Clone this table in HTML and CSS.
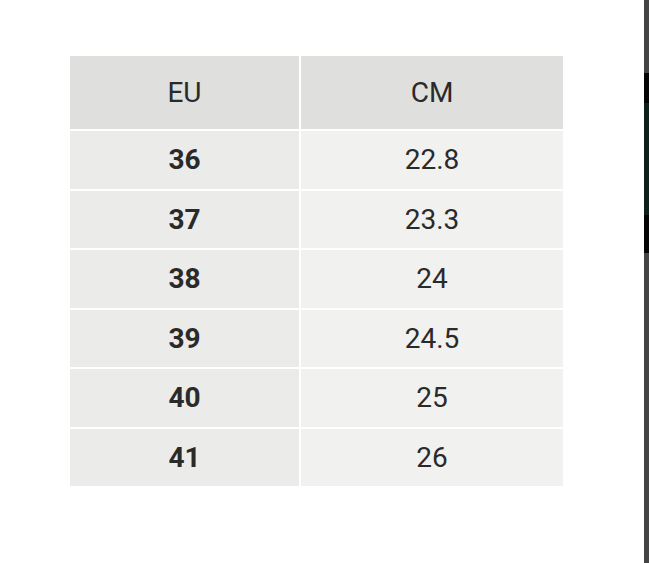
FILE: index.html
```html
<!DOCTYPE html>
<html lang="en">
<head>
<meta charset="utf-8">
<title>Size chart</title>
<link rel="stylesheet" href="styles.css">
</head>
<body>
<div class="page">
  <main class="main">
    <div class="chart">
      <div class="cell head">EU</div>
      <div class="cell head">CM</div>
      <div class="cell eu">36</div><div class="cell cm">22.8</div>
      <div class="cell eu">37</div><div class="cell cm">23.3</div>
      <div class="cell eu">38</div><div class="cell cm">24</div>
      <div class="cell eu">39</div><div class="cell cm">24.5</div>
      <div class="cell eu">40</div><div class="cell cm">25</div>
      <div class="cell eu">41</div><div class="cell cm">26</div>
    </div>
  </main>
  <div class="edge">
    <div class="edge-gray top"></div>
    <div class="edge-black a"></div>
    <div class="edge-green"></div>
    <div class="edge-black b"></div>
    <div class="edge-gray bottom"></div>
  </div>
</div>
</body>
</html>
```
FILE: styles.css
```css
html, body {
  margin: 0;
  padding: 0;
  background: #ffffff;
}
.page {
  display: flex;
  width: 649px;
  height: 563px;
  overflow: hidden;
}
.main {
  flex: 1;
  padding: 56px 0 0 70px;
}
.chart {
  display: grid;
  grid-template-columns: 229px 262px;
  grid-template-rows: 73px repeat(6, 57.5px);
  column-gap: 2px;
  row-gap: 2px;
  width: 493px;
  font-family: Roboto, "Liberation Sans", sans-serif;
  font-size: 28px;
  color: #2a2a2a;
}
.cell {
  display: flex;
  align-items: center;
  justify-content: center;
}
.head {
  background: #dfdfdd;
  font-weight: 400;
}
.eu {
  background: #ebebe9;
  font-weight: 700;
}
.cm {
  background: #f1f1ef;
  font-weight: 400;
}
.edge {
  width: 5px;
  display: flex;
  flex-direction: column;
}
.edge-gray { background: #444444; }
.edge-gray.top { height: 73px; }
.edge-gray.bottom { flex: 1; }
.edge-black { background: #050505; }
.edge-black.a { height: 30px; }
.edge-black.b { height: 38px; }
.edge-green { background: #0d2019; height: 112px; }
```
